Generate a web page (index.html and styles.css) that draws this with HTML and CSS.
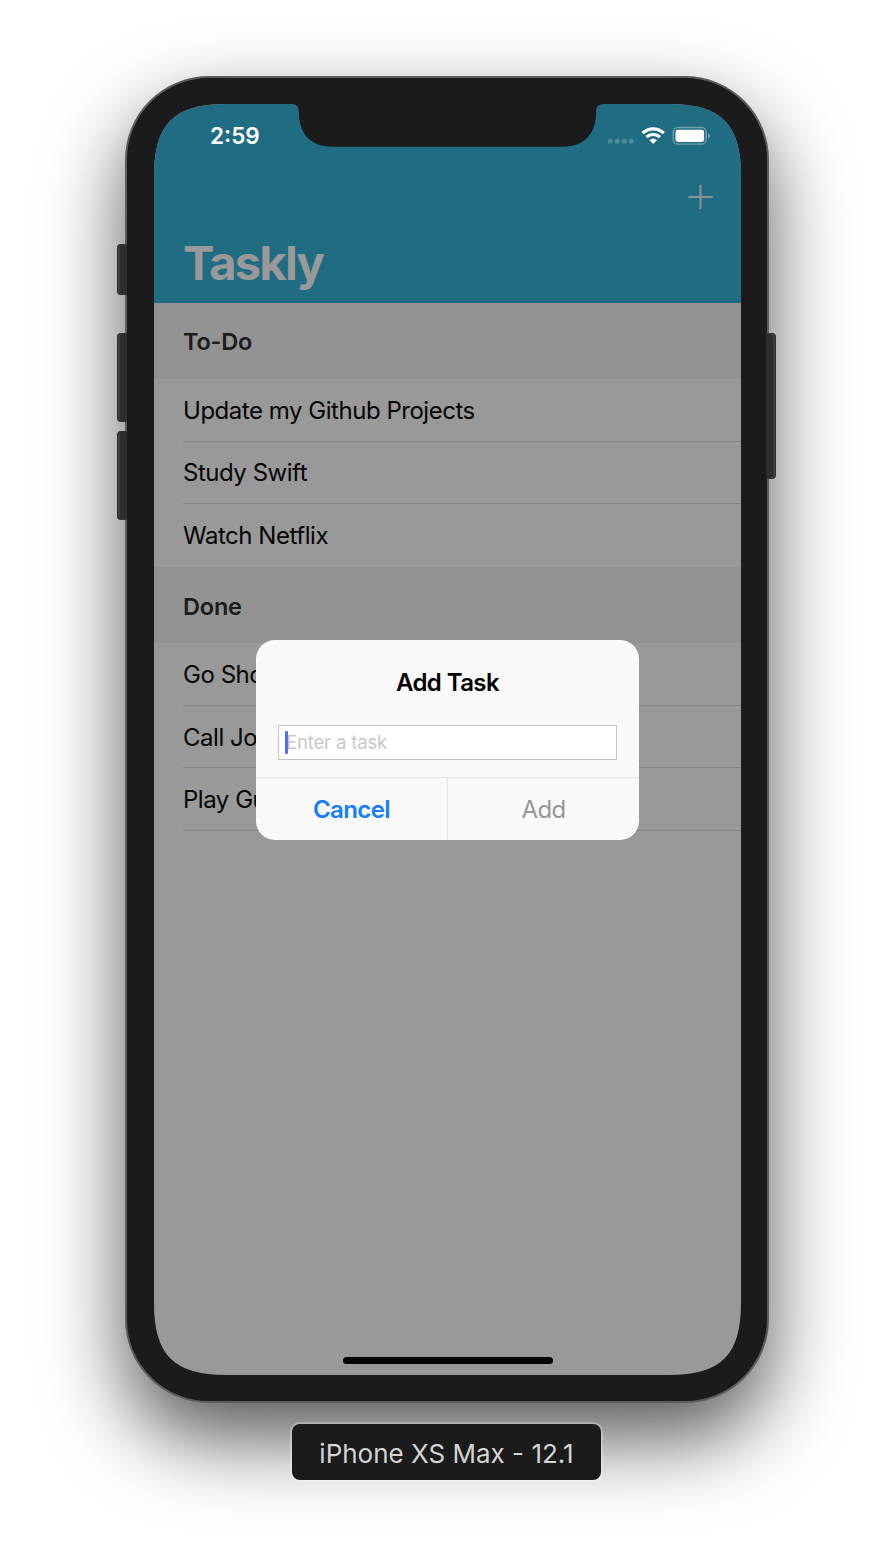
FILE: index.html
```html
<!DOCTYPE html>
<html lang="en">
<head>
<meta charset="utf-8">
<title>Taskly</title>
<link rel="stylesheet" href="styles.css">
</head>
<body>
<main class="stage">
  <div class="phone">
    <i class="key key-mute"></i>
    <i class="key key-up"></i>
    <i class="key key-down"></i>
    <i class="key key-power"></i>
    <div class="screen">
      <header class="nav">
        <div class="status">
          <span class="time">2:59</span>
          <svg class="status-icons" width="104" height="20" viewBox="0 0 104 20">
            <g fill="#4d8a9c">
              <rect x="0.8" y="12.8" width="4.8" height="4.8" rx="1.6"/><rect x="7.8" y="12.8" width="4.8" height="4.8" rx="1.6"/><rect x="14.8" y="12.8" width="4.8" height="4.8" rx="1.6"/><rect x="21.8" y="12.8" width="4.8" height="4.8" rx="1.6"/>
            </g>
            <g fill="none" stroke="#fff" stroke-width="3.1">
              <path d="M35.6 7.1 A15.3 15.3 0 0 1 56.8 7.1"/>
              <path d="M39.5 11.2 A9.6 9.6 0 0 1 52.9 11.2"/>
            </g>
            <path d="M46.2 18 L42.4 14.2 Q46.2 11 50 14.2 Z" fill="#fff"/>
            <rect x="66.3" y="1.5" width="32.8" height="16.6" rx="4.6" fill="none" stroke="#719fae" stroke-width="1.4"/>
            <rect x="68.5" y="3.7" width="28.6" height="12.2" rx="2.4" fill="#fff"/>
            <path d="M100.9 7.1 Q103 7.8 103 9.8 Q103 11.8 100.9 12.5 Z" fill="#719fae"/>
          </svg>
        </div>
        <div class="actions">
          <svg width="26" height="26" viewBox="0 0 26 26"><path d="M12.5 .8V25.2M.3 13H24.7" stroke="#8b9294" stroke-width="2"/></svg>
        </div>
        <h1 class="title">Taskly</h1>
      </header>
      <section class="group">
        <h2 class="group-head">To-Do</h2>
        <div class="row">Update my Github Projects</div>
        <div class="row">Study Swift</div>
        <div class="row row-last">Watch Netflix</div>
      </section>
      <section class="group">
        <h2 class="group-head group-done">Done</h2>
        <div class="row">Go Shopping</div>
        <div class="row">Call John</div>
        <div class="row">Play Guitar</div>
      </section>
      <svg class="notch" width="313" height="43" viewBox="0 0 313 43">
        <path d="M0 0 C6 0 8 3 8 9 C8 30 20 42.7 41 42.7 H272 C293 42.7 305 30 305 9 C305 3 307 0 313 0 Z" fill="#1b1b1b"/>
      </svg>
      <div class="home"></div>
      <div class="alert">
        <div class="alert-body">
          <div class="alert-title">Add Task</div>
          <div class="field"><i class="caret"></i><span class="placeholder">Enter a task</span></div>
        </div>
        <div class="buttons">
          <div class="button cancel">Cancel</div>
          <div class="button add">Add</div>
        </div>
      </div>
    </div>
  </div>
  <div class="caption">iPhone XS Max - 12.1</div>
</main>
</body>
</html>
```
FILE: styles.css
```css
* { box-sizing: border-box; }
body { margin: 0; background: #fff; font-family: Inter, "Liberation Sans", sans-serif; }
.stage {
  height: 1552px;
  padding-top: 76px;
  overflow: hidden;
  display: flex;
  flex-direction: column;
  align-items: center;
}
.phone {
  position: relative;
  width: 644px;
  height: 1327px;
  flex: none;
  padding: 26px 26px 26px 27px;
  border: 2px solid #5c5c5c;
  border-radius: 84px;
  background: #1b1b1b;
  box-shadow: 0 36px 80px rgba(0, 0, 0, .65);
}
.key {
  position: absolute;
  left: -10px;
  width: 10px;
  border-radius: 4px 0 0 4px;
  background: #2d2d2d;
  border: 1px solid #333;
  border-right: 0;
  box-shadow: inset 2px 0 #3d3d3d;
}
.key-mute { top: 166px; height: 51px; }
.key-up { top: 255px; height: 89px; }
.key-down { top: 353px; height: 89px; }
.key-power {
  left: auto;
  right: -9px;
  top: 255px;
  height: 146px;
  border: 1px solid #333;
  border-left: 0;
  border-radius: 0 4px 4px 0;
  box-shadow: inset -2px 0 #3d3d3d;
}
.screen {
  position: relative;
  width: 587px;
  height: 1271px;
  background: #999;
  clip-path: path("M0 72 C0 20 20 0 72 0 H515 C567 0 587 20 587 72 V1199 C587 1251 567 1271 515 1271 H72 C20 1271 0 1251 0 1199 Z");
}
.nav { height: 199px; background: #206d83; display: flex; flex-direction: column; }
.status {
  height: 62px;
  padding: 22px 30px 0 56px;
  display: flex;
  justify-content: space-between;
  align-items: flex-start;
}
.time { color: #fff; font-size: 22.5px; font-weight: 600; line-height: 20px; }
.status-icons { display: block; }
.actions { height: 62px; padding: 18px 27px 0; display: flex; justify-content: flex-end; }
.title {
  margin: 0;
  padding-left: 29px;
  font-size: 47px;
  line-height: 70px;
  font-weight: 700;
  letter-spacing: -1.7px;
  color: #999;
}
.group-head {
  margin: 0;
  height: 75.5px;
  padding: 2px 0 0 29px;
  display: flex;
  align-items: center;
  background: #939393;
  color: #1c1c1c;
  font-size: 23.5px;
  font-weight: 600;
  letter-spacing: -.2px;
}
.group-done { height: 76px; padding-top: 3px; }
.row {
  height: 62.4px;
  margin-left: 29px;
  padding-top: 1px;
  display: flex;
  align-items: center;
  border-bottom: 1px solid #868686;
  color: #050505;
  font-size: 24px;
  letter-spacing: -.47px;
}
.row:nth-child(2) { height: 63.3px; padding-top: 2px; }
.row-last { border-bottom-color: transparent; }
.notch { position: absolute; left: 137px; top: 0; }
.home {
  position: absolute;
  left: 189px;
  bottom: 11.5px;
  width: 209.5px;
  height: 7px;
  border-radius: 4px;
  background: #060606;
}
.alert {
  position: absolute;
  left: 102px;
  top: 536px;
  width: 383px;
  height: 200px;
  border-radius: 19px;
  background: #f9f9f9;
  display: flex;
  flex-direction: column;
}
.alert-body { height: 137px; padding: 26px 22px 0; }
.alert-title { height: 59px; text-align: center; font-size: 24px; line-height: 34px; font-weight: 600; letter-spacing: -.6px; color: #000; }
.field {
  width: 339px;
  height: 35px;
  padding-left: 6px;
  border: 1px solid #c4c4c6;
  background: #fff;
  display: flex;
  align-items: center;
}
.caret { width: 3px; height: 23px; border-radius: 1px; background: #4b72f0; margin-right: -2px; position: relative; }
.placeholder { font-size: 18.5px; letter-spacing: -.15px; line-height: 20px; padding-bottom: 1px; color: #c7c7cc; }
.buttons { flex: 1; border-top: 1px solid #e4e4e5; display: flex; }
.button { flex: 1; display: flex; align-items: center; justify-content: center; font-size: 24px; padding-top: 1px; }
.cancel { color: #157efb; font-weight: 600; border-right: 1px solid #e4e4e5; letter-spacing: -.6px; }
.add { color: #969696; letter-spacing: -.6px; }
.caption {
  position: relative;
  margin-top: 21px;
  left: -.5px;
  width: 309px;
  height: 56px;
  border-radius: 8px;
  background: #1b1b1b;
  box-shadow: 0 0 0 2px rgba(255, 255, 255, .28);
  color: #d4d4d4;
  font-size: 26px;
  display: flex;
  align-items: center;
  justify-content: center;
  padding-top: 3px;
}
```
